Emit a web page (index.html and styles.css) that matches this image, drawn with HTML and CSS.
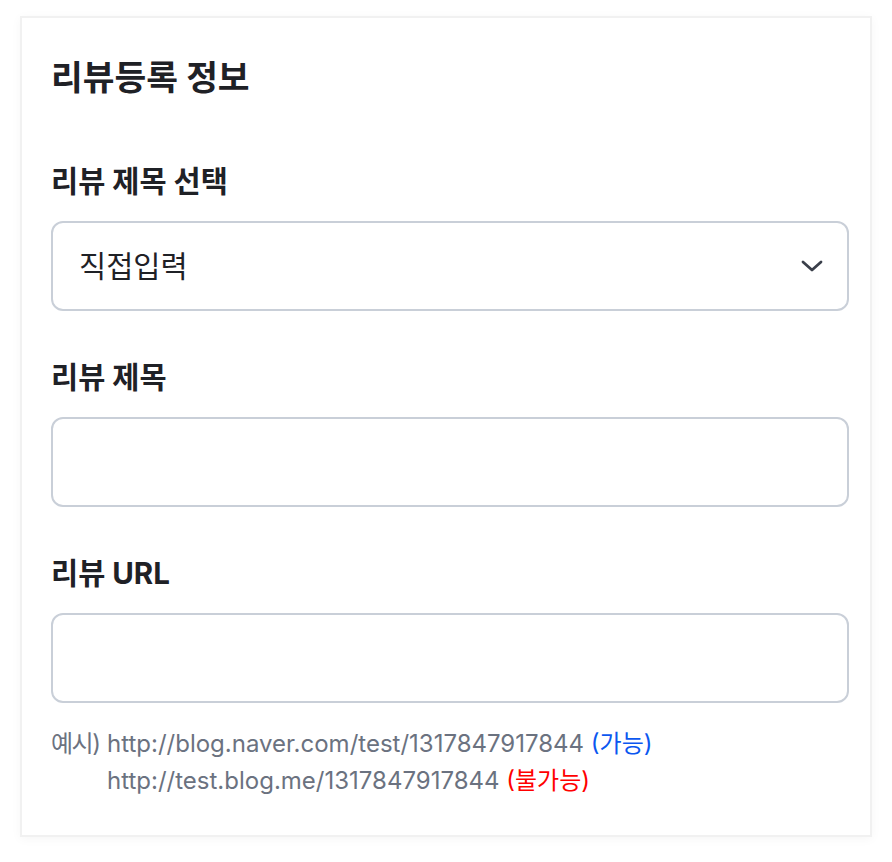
FILE: index.html
```html
<!DOCTYPE html>
<html lang="ko">
<head>
    <meta charset="UTF-8">
    <meta name="viewport" content="width=device-width, initial-scale=1.0">
    <title>리뷰등록 정보</title>
    <link rel="stylesheet" href="styles.css">
</head>
<body>
    <div class="review-card">
        <h2 class="card-title">리뷰등록 정보</h2>

        <div class="form-group">
            <label class="form-label" for="title-select">리뷰 제목 선택</label>
            <div class="select-wrap">
                <select id="title-select" class="form-select">
                    <option>직접입력</option>
                </select>
                <svg class="select-arrow" width="24" height="16" viewBox="0 0 24 16" fill="none">
                    <path d="M3 4l9 8 9-8" stroke="#3a3f4a" stroke-width="2.8" stroke-linecap="round" stroke-linejoin="round"/>
                </svg>
            </div>
        </div>

        <div class="form-group">
            <label class="form-label" for="review-title">리뷰 제목</label>
            <input id="review-title" class="form-input" type="text">
        </div>

        <div class="form-group form-group-last">
            <label class="form-label" for="review-url">리뷰 URL</label>
            <input id="review-url" class="form-input" type="text">
        </div>

        <div class="help-text">
            <div class="help-row">
                <span class="help-prefix">예시)</span>
                <span>http://blog.naver.com/test/1317847917844 <span class="ok">(가능)</span></span>
            </div>
            <div class="help-row">
                <span class="help-prefix"></span>
                <span>http://test.blog.me/1317847917844 <span class="no">(불가능)</span></span>
            </div>
        </div>
    </div>
</body>
</html>
```

FILE: styles.css
```css
body {
    margin: 0;
    padding: 16px 20px 26px;
    background: #fff;
    font-family: "Inter", "Noto Sans CJK KR", sans-serif;
    color: #1f2126;
}
.review-card {
    border: 2px solid #f1f1f1;
    box-shadow: 0 2px 10px rgba(0,0,0,0.04);
    padding: 37px 21px 36px 29px;
    background: #fff;
}
.card-title {
    margin: 0 0 62px;
    font-size: 34.5px;
    line-height: 46px;
    font-weight: 700;
    letter-spacing: 0;
}
.form-group {
    display: flex;
    flex-direction: column;
    gap: 21px;
    margin-bottom: 48px;
}
.form-group-last { margin-bottom: 22px; }
.form-label {
    font-size: 29.5px;
    line-height: 37px;
    font-weight: 700;
}
.select-wrap { position: relative; }
.form-select,
.form-input {
    box-sizing: border-box;
    width: 100%;
    height: 90px;
    border: 2px solid #c9cfd8;
    border-radius: 12px;
    background: #fff;
    font-family: inherit;
    font-size: 29.5px;
    color: #1f2126;
    padding: 0 26px;
    outline: none;
}
.form-select {
    appearance: none;
    -webkit-appearance: none;
}
.select-arrow {
    position: absolute;
    right: 25px;
    top: 37px;
    pointer-events: none;
}
.help-text {
    font-size: 24px;
    line-height: 37px;
    color: #6b7280;
}
.help-row {
    display: flex;
    white-space: nowrap;
}
.help-prefix {
    flex: 0 0 56px;
    letter-spacing: -1.5px;
}
.ok { color: #0b57f0; }
.no { color: #ff0000; }
```
